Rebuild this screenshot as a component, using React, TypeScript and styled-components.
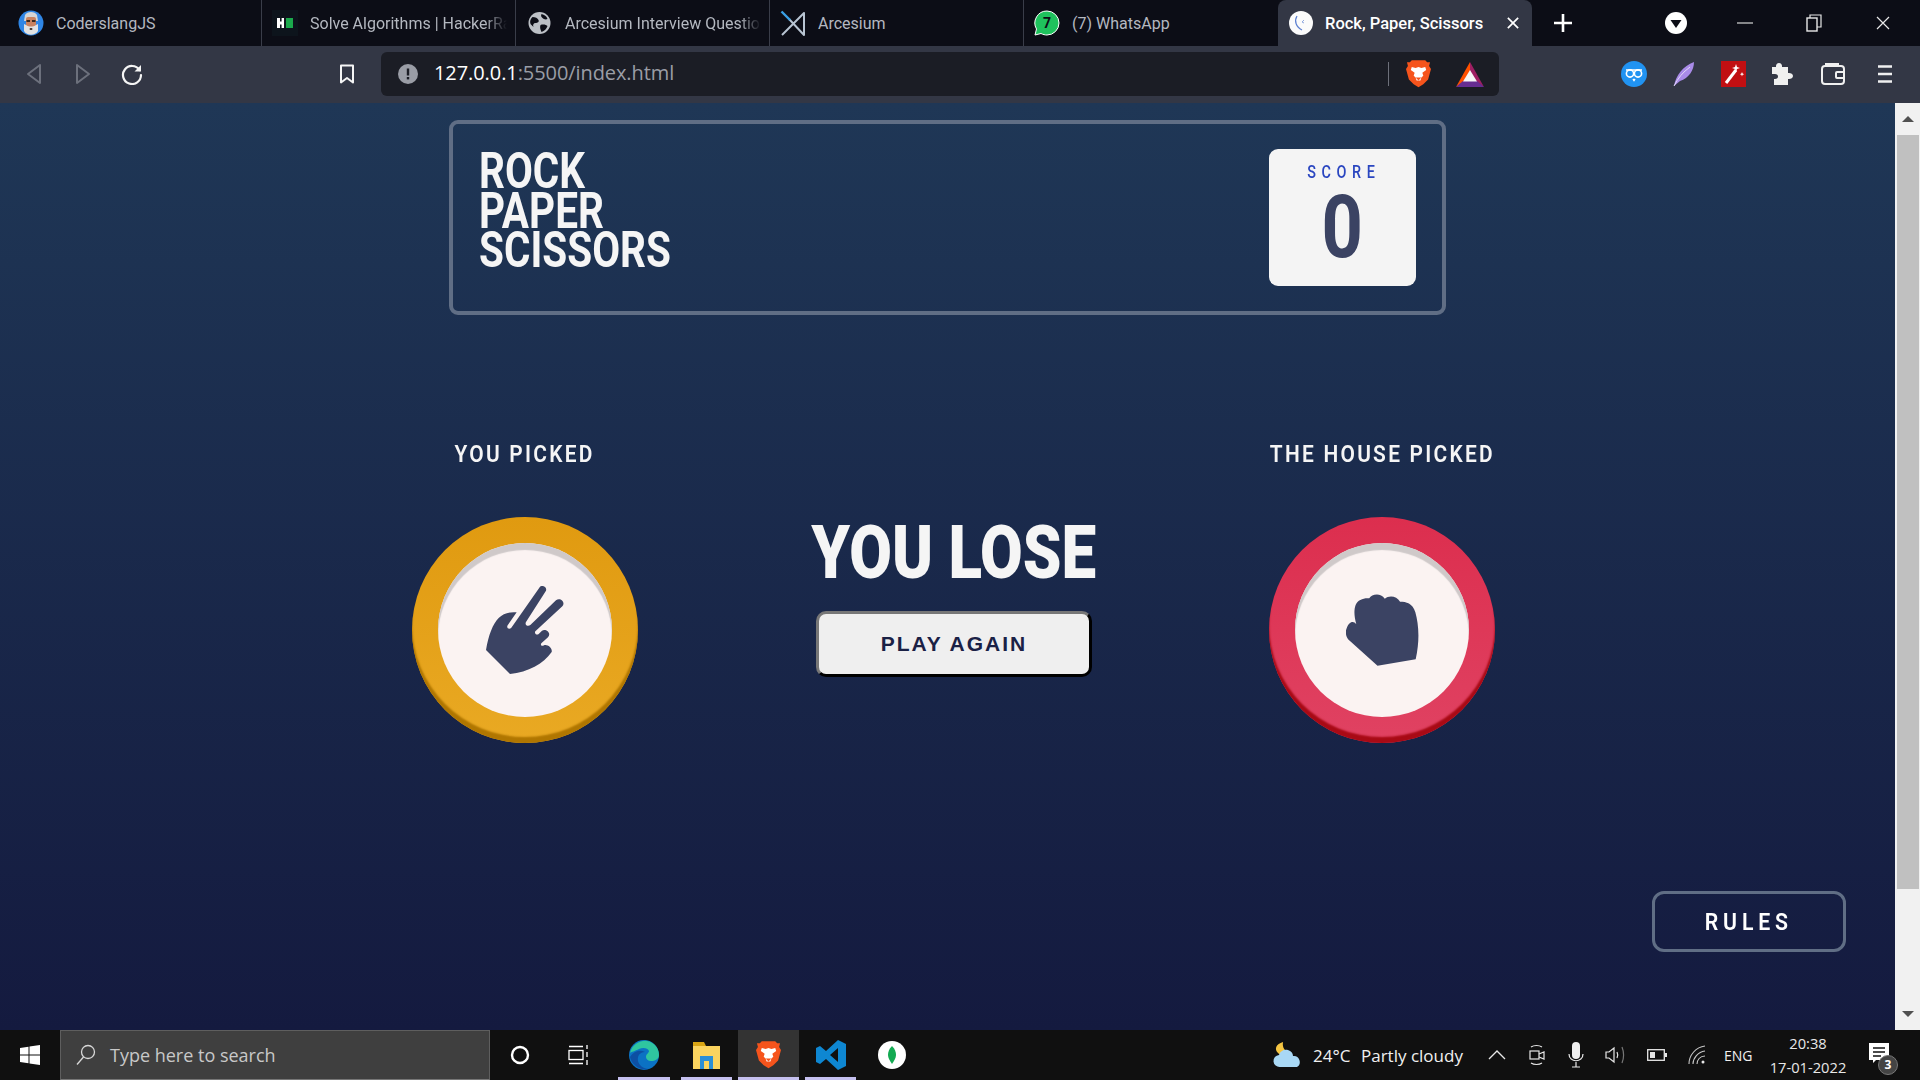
import React from "react";
import styled, { createGlobalStyle } from "styled-components";

const GlobalStyle = createGlobalStyle`
  html, body {
    margin: 0;
    padding: 0;
    width: 100%;
    height: 100%;
    overflow: hidden;
    background: #101010;
  }
  * { box-sizing: border-box; }
  body { font-family: "Open Sans", "Liberation Sans", sans-serif; }
`;

const Screen = styled.div`
  width: 1920px;
  height: 1080px;
  display: flex;
  flex-direction: column;
`;

/* browser chrome */
const TabStrip = styled.div`
  height: 46px;
  background: #0c0d16;
  display: flex;
  padding-left: 8px;
`;

const Tab = styled.div<{ $active?: boolean; $divider?: boolean }>`
  width: 254px;
  height: 46px;
  flex: none;
  display: flex;
  align-items: center;
  gap: 12px;
  padding: 0 ${(p) => (p.$active ? "13px" : "8px")} 0 ${(p) => (p.$active ? "11px" : "10px")};
  background: ${(p) => (p.$active ? "#333745" : "transparent")};
  border-radius: ${(p) => (p.$active ? "8px 8px 0 0" : "0")};
  color: ${(p) => (p.$active ? "#ffffff" : "#b4b8c0")};
  font-family: Roboto, sans-serif;
  font-size: ${(p) => (p.$active ? "16.5px" : "16px")};
  font-weight: ${(p) => (p.$active ? 500 : 400)};
  white-space: nowrap;
  border-right: ${(p) => (p.$divider ? "1px solid #3a3d49" : "none")};
`;

const TabTitle = styled.span<{ $fade?: boolean }>`
  flex: 1;
  overflow: hidden;
  ${(p) =>
    p.$fade &&
    "mask-image: linear-gradient(90deg, #000 calc(100% - 22px), transparent 100%);"}
`;

const StripControls = styled.div`
  flex: 1;
  display: flex;
  align-items: center;
  height: 46px;
`;

const Slot = styled.div<{ $w: number }>`
  width: ${(p) => p.$w}px;
  flex: none;
  display: flex;
  align-items: center;
  justify-content: center;
`;

const Toolbar = styled.div`
  height: 57px;
  background: #333745;
  display: flex;
  align-items: center;
  padding-bottom: 1px;
`;

const UrlBar = styled.div`
  width: 1118px;
  height: 44px;
  background: #1b1d25;
  border-radius: 6px;
  display: flex;
  align-items: center;
  flex: none;
`;

const UrlText = styled.div`
  flex: 1;
  font-size: 20px;
  line-height: 26px;
  padding-bottom: 2px;
  color: #ffffff;
  margin-left: -1px;
  letter-spacing: -0.08px;
  span { color: #9a9da6; }
`;

const UrlDivider = styled.div`
  width: 1px;
  height: 24px;
  background: #6d707a;
`;

/* page */
const Viewport = styled.div`
  flex: 1;
  display: flex;
  min-height: 0;
`;

const Page = styled.main`
  flex: 1;
  display: flex;
  flex-direction: column;
  padding-top: 17px;
  background: linear-gradient(180deg, #1f3756 0%, #141a3f 100%);
`;

const ScoreHeader = styled.header`
  width: 997px;
  height: 195px;
  margin: 0 0 0 449px;
  border: 4px solid #606e85;
  border-radius: 9px;
  display: flex;
  justify-content: space-between;
  padding: 25px 26px 25px 26px;
`;

const GameTitle = styled.h1`
  margin: 0;
  padding-top: 3px;
  font-family: Roboto, sans-serif;
  font-size: 50px;
  font-weight: 700;
  line-height: 39.5px;
  color: #f5f5f5;
  transform: scaleX(0.81);
  transform-origin: left top;
`;

const ScoreCard = styled.div`
  width: 147px;
  height: 137px;
  background: #f4f4f4;
  border-radius: 9px;
  display: flex;
  flex-direction: column;
  align-items: center;
  padding-top: 12px;
`;

const ScoreLabel = styled.div`
  font-family: Roboto, sans-serif;
  font-size: 18px;
  font-weight: 500;
  line-height: 22px;
  letter-spacing: 7px;
  margin-right: -2px;
  color: #2a46c0;
  transform: scaleX(0.8);
`;

const ScoreValue = styled.div`
  font-family: Roboto, sans-serif;
  font-size: 88px;
  font-weight: 700;
  line-height: 88px;
  color: #3b4363;
  transform: scaleX(0.82);
`;

const Arena = styled.section`
  display: flex;
  margin: 125px 0 0 412px;
`;

const PickColumn = styled.div`
  width: 226px;
  display: flex;
  flex-direction: column;
  align-items: center;
`;

const PickLabel = styled.div`
  font-family: Roboto, sans-serif;
  font-size: 24px;
  font-weight: 600;
  line-height: 28px;
  letter-spacing: 2.6px;
  color: #f5f5f5;
  white-space: nowrap;
  transform: scaleX(0.87);
  margin-bottom: 49px;
`;

const Chip = styled.div<{ $top: string; $bottom: string; $edge: string }>`
  width: 226px;
  height: 226px;
  border-radius: 50%;
  background: linear-gradient(180deg, ${(p) => p.$top}, ${(p) => p.$bottom});
  box-shadow: inset 0 -6px 2px ${(p) => p.$edge};
  display: flex;
  align-items: center;
  justify-content: center;
`;

const ChipFace = styled.div`
  width: 174px;
  height: 174px;
  border-radius: 50%;
  background: #fbf3f2;
  box-shadow: inset 0 7px 1px #cfc9c9;
  display: flex;
  align-items: center;
  justify-content: center;
`;

const ResultColumn = styled.div`
  width: 284px;
  margin: 0 173px 0 174px;
  display: flex;
  flex-direction: column;
  align-items: center;
  padding-top: 68px;
`;

const ResultText = styled.div`
  font-family: Roboto, sans-serif;
  font-size: 75px;
  font-weight: 900;
  line-height: 88px;
  color: #f5f5f5;
  white-space: nowrap;
  transform: scaleX(0.825);
`;

const PlayAgain = styled.button`
  width: 276px;
  height: 66px;
  margin-top: 15px;
  background: #efefef;
  border: 3px outset #8a8a8a;
  border-color: #777777 #222222 #222222 #777777;
  border-radius: 10px;
  font-family: "Liberation Sans", Arial, sans-serif;
  font-size: 21px;
  font-weight: 700;
  letter-spacing: 2px;
  color: #1a2145;
`;

const RulesRow = styled.div`
  flex: 1;
  display: flex;
  justify-content: flex-end;
  align-items: flex-end;
  padding: 0 49px 78px 0;
`;

const RulesButton = styled.button`
  width: 194px;
  height: 61px;
  background: transparent;
  border: 3px solid #606e85;
  border-radius: 12px;
  color: #ffffff;
  font-family: Roboto, sans-serif;
  font-size: 24px;
  font-weight: 600;
  letter-spacing: 5.5px;
`;

const RulesLabel = styled.span`
  display: inline-block;
  transform: scaleX(0.885);
`;

const Scrollbar = styled.div`
  width: 25px;
  background: #f1f1f1;
  display: flex;
  flex-direction: column;
  align-items: center;
`;

const ScrollArrow = styled.div<{ $up?: boolean }>`
  height: 32px;
  flex: none;
  display: flex;
  align-items: center;
  justify-content: center;
  &::before {
    content: "";
    border-left: 6px solid transparent;
    border-right: 6px solid transparent;
    ${(p) => (p.$up ? "border-bottom: 6px solid #505050;" : "border-top: 6px solid #505050;")}
  }
`;

const ScrollThumb = styled.div`
  width: 22px;
  height: 754px;
  background: #c0c0c0;
`;

const ScrollTrack = styled.div`
  flex: 1;
`;

/* taskbar */
const Taskbar = styled.footer`
  height: 50px;
  background: #101010;
  display: flex;
  align-items: center;
  color: #ffffff;
`;

const SearchBox = styled.div`
  width: 430px;
  height: 50px;
  flex: none;
  background: #3f3f3f;
  border: 1px solid #5e5e5e;
  border-bottom-color: #777777;
  display: flex;
  align-items: center;
  gap: 14px;
  padding-left: 15px;
  color: #c8c8c8;
  font-size: 18px;
`;

const TaskItem = styled.div<{ $w: number; $open?: boolean; $active?: boolean }>`
  width: ${(p) => p.$w}px;
  height: 50px;
  flex: none;
  display: flex;
  align-items: center;
  justify-content: center;
  background: ${(p) => (p.$active ? "#333333" : "transparent")};
  border-bottom: 3px solid ${(p) => (p.$open ? "#c5c0ef" : "transparent")};
  border-top: 3px solid transparent;
`;

const TraySpacer = styled.div`
  flex: 1;
`;

const TrayText = styled.div<{ $w: number; $size?: number }>`
  width: ${(p) => p.$w}px;
  flex: none;
  font-size: ${(p) => p.$size ?? 17}px;
  white-space: nowrap;
  color: #f0f0f0;
`;

const Clock = styled.div`
  width: 100px;
  flex: none;
  text-align: center;
  font-size: 14.7px;
  line-height: 24px;
  color: #e8e8e8;
`;

const NotifyWrap = styled.div`
  width: 62px;
  height: 50px;
  flex: none;
  position: relative;
  display: flex;
  align-items: center;
  justify-content: center;
  padding: 0 20px 4px 0;
`;

const NotifyBadge = styled.div`
  position: absolute;
  left: 20px;
  top: 25px;
  width: 20px;
  height: 20px;
  border-radius: 50%;
  background: #444444;
  border: 1px solid #777777;
  font-size: 12px;
  font-weight: 700;
  line-height: 18px;
  text-align: center;
  color: #ffffff;
`;

function ScissorsHand() {
  return (
    <svg width="78" height="88" viewBox="258 258 234 264">
      <path
        fill="#3b4363"
        d="M330 522 L258 450 C266 405 278 372 296 354 C310 340 328 335 350 337 L323 376 C318 384 328 390 334 383 L418 263 C426 252 444 262 437 274 L378 366 C373 375 384 381 391 375 L468 301 C480 291 498 306 487 319 L406 394 C402 400 410 407 416 402 L426 392 C436 384 456 398 444 412 L424 430 C420 436 426 440 432 436 C442 432 458 444 455 456 C430 492 385 516 330 522 Z"
      />
    </svg>
  );
}

function RockHand() {
  return (
    <svg width="73" height="72" viewBox="255 282 220 215">
      <path
        fill="#3b4363"
        d="M350 497 L262 418 C254 408 252 394 258 382 C262 368 276 358 286 372 C280 350 278 330 284 314 C290 298 310 292 325 294 C332 282 358 276 372 295 C384 284 408 286 418 304 C436 304 456 308 464 336 C474 372 478 420 465 478 Z"
      />
    </svg>
  );
}

function CoderFavicon() {
  return (
    <svg width="26" height="26" viewBox="0 0 26 26">
      <circle cx="13" cy="13" r="12.5" fill="#2f86e6" />
      <path d="M7 5c2-4 10-4 12 0l1 6H6z" fill="#d5d5d5" />
      <rect x="8" y="7" width="10" height="11" rx="2" fill="#c9825f" />
      <rect x="8.500" y="10" width="3.500" height="2" fill="#3a2a20" />
      <rect x="14" y="10" width="3.500" height="2" fill="#3a2a20" />
      <path d="M6 14l2 1c3 2 7 2 10 0l2-1v7c-3 5-11 5-14 0z" fill="#e2e2e2" />
      <ellipse cx="13" cy="19" rx="1.500" ry="1" fill="#3a2a20" />
    </svg>
  );
}

function HackerFavicon() {
  return (
    <svg width="26" height="26" viewBox="0 0 26 26">
      <rect width="26" height="26" fill="#0d141c" />
      <rect x="5" y="8" width="7" height="10" fill="#ffffff" />
      <rect x="8" y="8" width="1.6" height="3.5" fill="#0d141c" />
      <rect x="8" y="14.5" width="1.6" height="3.5" fill="#0d141c" />
      <rect x="14" y="8" width="7" height="10" fill="#1ba94c" />
    </svg>
  );
}

function GlobeFavicon() {
  return (
    <svg width="27" height="24" viewBox="-1.500 0 27 24">
      <circle cx="12" cy="12" r="11" fill="#bcc0c6" />
      <path d="M5 6c3 0 5 1 6 3s-1 3-3 3-3 2-2 4l-3-3C2 10 3 8 5 6zM14 3c3 1 5 2 6 5-2 1-4 0-5-1s-2-2-1-4zM13 14c3-1 6 0 7 1-1 3-3 5-6 6-1-2-2-5-1-7z" fill="#0c0d16" />
    </svg>
  );
}

function VsFavicon() {
  return (
    <svg width="26" height="26" viewBox="0 0 26 26" fill="none">
      <path d="M2 25 L24 3 V25 L9 9" stroke="#b8c4d2" strokeWidth="2" strokeLinejoin="round" />
      <path d="M1.500 1.500 L10 10" stroke="#3aa0e6" strokeWidth="2.400" />
    </svg>
  );
}

function WhatsAppFavicon() {
  return (
    <svg width="26" height="26" viewBox="0 0 26 26">
      <path d="M13 1a12 12 0 0 1 0 24c-2 0-4-.5-6-1.5L1 25l1.5-6A12 12 0 0 1 13 1z" fill="#1fc25d" stroke="#ffffff" strokeWidth="1" />
      <text x="13" y="18" textAnchor="middle" fontSize="14" fontWeight="700" fontFamily="Roboto" fill="#0c0d16">7</text>
    </svg>
  );
}

function ActiveFavicon() {
  return (
    <svg width="24" height="24" viewBox="0 0 24 24">
      <circle cx="12" cy="12" r="12" fill="#fbfbfb" />
      <path d="M8 5C5 10 7 16 13 19" stroke="#5b7fd0" strokeWidth="1.2" fill="none" />
      <path d="M15 9l-2 2 2 1" stroke="#8fa8e0" strokeWidth="1" fill="none" />
    </svg>
  );
}

function NavArrow({ flip, color }: { flip?: boolean; color: string }) {
  return (
    <svg width="16" height="22" viewBox="0 0 16 22" style={flip ? { transform: "scaleX(-1)" } : undefined}>
      <path d="M14 2 L2 11 L14 20 Z" fill="none" stroke={color} strokeWidth="2" strokeLinejoin="round" />
    </svg>
  );
}

function ReloadIcon() {
  return (
    <svg width="22" height="22" viewBox="0 0 22 22" fill="none">
      <path d="M18.5 7A9 9 0 1 0 20 12" stroke="#f5f5f5" strokeWidth="2.2" strokeLinecap="round" />
      <path d="M20 2v6.5h-6.5z" fill="#f5f5f5" />
    </svg>
  );
}

function BookmarkIcon() {
  return (
    <svg width="16" height="20" viewBox="0 0 16 20" fill="none">
      <path d="M2 1.5h12v17l-6-4.5-6 4.5z" stroke="#f5f5f5" strokeWidth="2" strokeLinejoin="round" />
    </svg>
  );
}

function InfoIcon() {
  return (
    <svg width="20" height="20" viewBox="0 0 20 20">
      <circle cx="10" cy="10" r="10" fill="#9a9da6" />
      <rect x="8.8" y="4.5" width="2.4" height="7" fill="#1b1d25" />
      <rect x="8.8" y="13" width="2.4" height="2.4" fill="#1b1d25" />
    </svg>
  );
}

function BraveIcon({ size = 25 }: { size?: number }) {
  return (
    <svg width={size} height={size * 1.18} viewBox="0 0 26 30">
      <path d="M6 1h14l2 2 3 0-1 4 2 3-3 11-5 5-5 3-5-3-5-5L0 10l2-3-1-4 3 0z" fill="#f6541c" />
      <path d="M6 8l4 1 3-1 3 1 4-1 1 3-4 3 1 3-2 2-1 3h-4l-1-3-2-2 1-3-4-3z" fill="#ffffff" />
      <path d="M10 19h6l-3 3z" fill="#f6541c" />
    </svg>
  );
}

function BatIcon() {
  return (
    <svg width="28" height="25" viewBox="0 0 28 25">
      <path d="M14 0 L28 25 L14 15 Z" fill="#9e1f63" />
      <path d="M14 0 L0 25 L14 15 Z" fill="#ff5000" />
      <path d="M0 25 H28 L21 19 H7 Z" fill="#662d91" />
      <path d="M14 8 L21 19.500 H7 Z" fill="#f7f7f7" />
    </svg>
  );
}

function OwlIcon() {
  return (
    <svg width="26" height="26" viewBox="0 0 26 26" fill="none">
      <circle cx="13" cy="13" r="13" fill="#2193f2" />
      <circle cx="9" cy="12.5" r="3.6" stroke="#ffffff" strokeWidth="1.6" />
      <circle cx="17" cy="12.5" r="3.6" stroke="#ffffff" strokeWidth="1.6" />
      <path d="M5 9h16M12 18l1 1.5 1-1.5" stroke="#ffffff" strokeWidth="1.4" />
    </svg>
  );
}

function QuillIcon() {
  return (
    <svg width="24" height="26" viewBox="0 0 24 26">
      <path d="M2 25C4 14 11 5 22 1c0 8-5 16-14 19z" fill="#a98be8" />
      <path d="M2 25c4-8 9-14 16-19" stroke="#e2d8f8" strokeWidth="1" fill="none" />
    </svg>
  );
}

function WandIcon() {
  return (
    <svg width="25" height="26" viewBox="0 0 25 26">
      <rect width="25" height="26" fill="#c10f12" />
      <path d="M5 22L15 9" stroke="#ffffff" strokeWidth="3" />
      <path d="M15 3l1 3 3 1-3 1-1 3-1-3-3-1 3-1zM21 11l.6 1.6 1.6.6-1.6.6-.6 1.6-.6-1.6-1.6-.6 1.6-.6z" fill="#ffffff" />
    </svg>
  );
}

function PuzzleIcon() {
  return (
    <svg width="24" height="24" viewBox="0 0 24 24">
      <path d="M9 1c2 0 3 1.500 3 3v1h6v6h1c2 0 4 1 4 3s-2 3-4 3h-1v6H4v-6h1c2 0 3-1 3-2.500S7 12 5 12H2V5h4V4c0-1.500 1-3 3-3z" fill="#f0f0f0" />
    </svg>
  );
}

function WalletIcon() {
  return (
    <svg width="24" height="22" viewBox="0 0 24 22" fill="none">
      <rect x="1" y="3" width="22" height="18" rx="3" stroke="#f0f0f0" strokeWidth="2" />
      <path d="M4 1h14" stroke="#f0f0f0" strokeWidth="2" />
      <rect x="15" y="9" width="8" height="6" rx="1" fill="#333745" stroke="#f0f0f0" strokeWidth="2" />
    </svg>
  );
}

function MenuIcon() {
  return (
    <svg width="16" height="20" viewBox="0 0 16 20">
      <path d="M1 2.500h14M1 10h14M1 17.500h14" stroke="#f0f0f0" strokeWidth="2.400" />
    </svg>
  );
}

function DropdownBadge() {
  return (
    <svg width="22" height="22" viewBox="0 0 22 22">
      <circle cx="11" cy="11" r="11" fill="#ffffff" />
      <path d="M5.500 8h11L11 16z" fill="#0c0d16" />
    </svg>
  );
}

function PlusIcon() {
  return (
    <svg width="20" height="20" viewBox="0 0 20 20">
      <path d="M10 1v18M1 10h18" stroke="#ffffff" strokeWidth="2.600" />
    </svg>
  );
}

function CloseGlyph({ size, color, width }: { size: number; color: string; width: number }) {
  return (
    <svg width={size} height={size} viewBox="0 0 14 14">
      <path d="M1 1l12 12M13 1L1 13" stroke={color} strokeWidth={width} />
    </svg>
  );
}

function MinimizeIcon() {
  return (
    <svg width="16" height="2" viewBox="0 0 16 2">
      <path d="M0 1h16" stroke="#d8d8d8" strokeWidth="1.200" />
    </svg>
  );
}

function RestoreIcon() {
  return (
    <svg width="16" height="18" viewBox="0 0 16 18" fill="none">
      <rect x="1" y="4" width="10" height="13" stroke="#e8e8e8" strokeWidth="1.400" />
      <path d="M4 4V1h11v12h-4" stroke="#e8e8e8" strokeWidth="1.200" />
    </svg>
  );
}

function WindowsLogo() {
  return (
    <svg width="20" height="20" viewBox="0 0 20 20">
      <path d="M0 3l8.500-1.300v7.800H0zM9.500 1.500L20 0v9.500H9.500zM0 10.500h8.500v7.800L0 17zM9.500 10.500H20V20L9.500 18.500z" fill="#ffffff" />
    </svg>
  );
}

function SearchGlass() {
  return (
    <svg width="20" height="22" viewBox="0 0 20 22" fill="none">
      <circle cx="12" cy="8" r="6.500" stroke="#d8d8d8" strokeWidth="1.300" />
      <path d="M7.500 13L1 20.500" stroke="#d8d8d8" strokeWidth="1.300" />
    </svg>
  );
}

function CortanaIcon() {
  return (
    <svg width="20" height="20" viewBox="0 0 20 20" fill="none">
      <circle cx="10" cy="10" r="8" stroke="#ffffff" strokeWidth="2.400" />
    </svg>
  );
}

function TaskViewIcon() {
  return (
    <svg width="22" height="20" viewBox="0 0 22 20" fill="none" stroke="#ffffff" strokeWidth="1.300">
      <rect x="1" y="5.500" width="14" height="9" />
      <path d="M1 1.500h14M1 18.500h14M19 0v4M19 7v5M19 15v5" />
    </svg>
  );
}

function EdgeIcon() {
  return (
    <svg width="30" height="30" viewBox="0 0 30 30">
      <circle cx="15" cy="15" r="15" fill="#0b72c4" />
      <path d="M1 13C3 4 12 0 18 1c7 1 12 7 12 14 0 4-4 6-8 6-3 0-5-2-5-4 0-3 3-4 3-6-1-3-6-4-10-2-4 2-8 3-9 4z" fill="#2fc5a0" />
      <path d="M16 12c-5 0-8 4-7 9 1 4 5 8 11 8-8 2-17-3-19-12 3-5 9-8 15-5z" fill="#0d4fa3" />
    </svg>
  );
}

function FolderIcon() {
  return (
    <svg width="29" height="29" viewBox="0 0 29 29">
      <path d="M1 1h11l2 4H1z" fill="#d9a514" />
      <rect x="1" y="5" width="27" height="23" fill="#fbd45f" />
      <rect x="8" y="15" width="13" height="13" fill="#2b8fd6" />
      <rect x="12" y="20" width="5" height="8" fill="#fbd45f" />
    </svg>
  );
}

function VsCodeIcon() {
  return (
    <svg width="30" height="30" viewBox="0 0 30 30">
      <path d="M22 0l8 4v22l-8 4-12-11-6 5-4-2V8l4-2 6 5zM22 8l-8 7 8 7z" fill="#0e87d2" />
    </svg>
  );
}

function MongoIcon() {
  return (
    <svg width="28" height="28" viewBox="0 0 28 28">
      <circle cx="14" cy="14" r="14" fill="#ffffff" />
      <path d="M14 5c3 3 4 6 4 9s-2 6-4 9c-2-3-4-6-4-9s1-6 4-9z" fill="#13aa52" />
    </svg>
  );
}

function WeatherIcon() {
  return (
    <svg width="30" height="28" viewBox="0 0 30 28">
      <path d="M10 1c-1 6 2 10 8 10-2 4-9 5-13 1S3 3 10 1z" fill="#f5c542" />
      <path d="M7 26a6 6 0 0 1-1-12c1-4 5-6 9-5 3 1 5 3 5 6a6 6 0 0 1 4 11z" fill="#a9d8f5" />
    </svg>
  );
}

function ChevronUp() {
  return (
    <svg width="18" height="10" viewBox="0 0 18 10" fill="none">
      <path d="M1 9l8-8 8 8" stroke="#e8e8e8" strokeWidth="1.300" />
    </svg>
  );
}

function MeetIcon() {
  return (
    <svg width="16" height="24" viewBox="0 0 16 24" fill="none" stroke="#e8e8e8" strokeWidth="1.200">
      <rect x="1" y="8" width="9" height="8" />
      <path d="M10 11l5-2v7l-5-2M2 4c3-2 8-2 11 0M2 20c3 2 8 2 11 0" />
    </svg>
  );
}

function MicIcon() {
  return (
    <svg width="16" height="26" viewBox="0 0 16 26" fill="none">
      <rect x="4" y="0" width="8" height="17" rx="4" fill="#f0f0f0" />
      <path d="M1 12c0 9 14 9 14 0M8 20v5M4 25h8" stroke="#e8e8e8" strokeWidth="1.200" />
    </svg>
  );
}

function SpeakerIcon() {
  return (
    <svg width="20" height="20" viewBox="0 0 20 20" fill="none" stroke="#e8e8e8" strokeWidth="1.200">
      <path d="M1 7h3l5-4v14l-5-4H1z" />
      <path d="M12 7c1 2 1 4 0 6" />
      <path d="M17 2c2 5 2 11 0 16" stroke="#777777" />
    </svg>
  );
}

function BatteryIcon() {
  return (
    <svg width="20" height="12" viewBox="0 0 20 12" fill="none">
      <rect x="0.700" y="0.700" width="16.600" height="10.600" stroke="#e8e8e8" strokeWidth="1.300" />
      <rect x="3" y="3" width="5" height="6" fill="#e8e8e8" />
      <rect x="18" y="4" width="2" height="4" fill="#e8e8e8" />
    </svg>
  );
}

function WifiIcon() {
  return (
    <svg width="18" height="20" viewBox="0 0 18 20" fill="none" stroke="#c8c8c8" strokeWidth="1.100">
      <path d="M1 19C1 10 8 2 17 1M5 19c0-6 5-12 12-13M9 19c0-4 3-8 8-8" />
      <circle cx="15" cy="17" r="1.500" fill="#e8e8e8" stroke="none" />
    </svg>
  );
}

function NotifyIcon() {
  return (
    <svg width="20" height="20" viewBox="0 0 20 20">
      <path d="M0 0h20v17H7l-3 3v-3H0z" fill="#ffffff" />
      <path d="M4 5h12M4 9h12M4 13h8" stroke="#101010" strokeWidth="1.400" />
    </svg>
  );
}

const tabs = [
  { id: "coder", title: "CoderslangJS", icon: <CoderFavicon /> },
  { id: "hacker", title: "Solve Algorithms | HackerRank", icon: <HackerFavicon />, fade: true },
  { id: "arc", title: "Arcesium Interview Questions", icon: <GlobeFavicon />, fade: true },
  { id: "vs", title: "Arcesium", icon: <VsFavicon /> },
  { id: "wa", title: "(7) WhatsApp", icon: <WhatsAppFavicon /> },
];

export default function App() {
  return (
    <Screen>
      <GlobalStyle />
      <TabStrip>
        {tabs.map((tab, i) => (
          <Tab key={tab.id} $divider={i < tabs.length - 1}>
            {tab.icon}
            <TabTitle $fade={tab.fade}>{tab.title}</TabTitle>
          </Tab>
        ))}
        <Tab $active>
          <ActiveFavicon />
          <TabTitle>Rock, Paper, Scissors</TabTitle>
          <CloseGlyph size={12} color="#ffffff" width={2} />
        </Tab>
        <StripControls>
          <Slot $w={62}><PlusIcon /></Slot>
          <Slot $w={52} />
          <Slot $w={60}><DropdownBadge /></Slot>
          <Slot $w={77}><MinimizeIcon /></Slot>
          <Slot $w={62}><RestoreIcon /></Slot>
          <Slot $w={76}><CloseGlyph size={14} color="#e8e8e8" width={1.2} /></Slot>
        </StripControls>
      </TabStrip>

      <Toolbar>
        <Slot $w={68}><NavArrow color="#6c707c" /></Slot>
        <Slot $w={30}><NavArrow flip color="#6c707c" /></Slot>
        <Slot $w={68}><ReloadIcon /></Slot>
        <Slot $w={161} />
        <Slot $w={40}><BookmarkIcon /></Slot>
        <Slot $w={14} />
        <UrlBar>
          <Slot $w={54}><InfoIcon /></Slot>
          <UrlText>
            127.0.0.1<span>:5500/index.html</span>
          </UrlText>
          <UrlDivider />
          <Slot $w={58}><BraveIcon /></Slot>
          <Slot $w={45}><BatIcon /></Slot>
          <Slot $w={7} />
        </UrlBar>
        <Slot $w={117} />
        <Slot $w={36}><OwlIcon /></Slot>
        <Slot $w={64}><QuillIcon /></Slot>
        <Slot $w={34}><WandIcon /></Slot>
        <Slot $w={64}><PuzzleIcon /></Slot>
        <Slot $w={38}><WalletIcon /></Slot>
        <Slot $w={66}><MenuIcon /></Slot>
      </Toolbar>

      <Viewport>
        <Page>
          <ScoreHeader>
            <GameTitle>
              ROCK
              <br />
              PAPER
              <br />
              SCISSORS
            </GameTitle>
            <ScoreCard>
              <ScoreLabel>SCORE</ScoreLabel>
              <ScoreValue>0</ScoreValue>
            </ScoreCard>
          </ScoreHeader>

          <Arena>
            <PickColumn>
              <PickLabel>YOU PICKED</PickLabel>
              <Chip $top="#e09a10" $bottom="#e9a923" $edge="#b07600">
                <ChipFace>
                  <ScissorsHand />
                </ChipFace>
              </Chip>
            </PickColumn>
            <ResultColumn>
              <ResultText>YOU LOSE</ResultText>
              <PlayAgain>PLAY AGAIN</PlayAgain>
            </ResultColumn>
            <PickColumn>
              <PickLabel>THE HOUSE PICKED</PickLabel>
              <Chip $top="#dc2e4e" $bottom="#e04262" $edge="#a80a15">
                <ChipFace>
                  <RockHand />
                </ChipFace>
              </Chip>
            </PickColumn>
          </Arena>

          <RulesRow>
            <RulesButton>
              <RulesLabel>RULES</RulesLabel>
            </RulesButton>
          </RulesRow>
        </Page>
        <Scrollbar>
          <ScrollArrow $up />
          <ScrollThumb />
          <ScrollTrack />
          <ScrollArrow />
        </Scrollbar>
      </Viewport>

      <Taskbar>
        <Slot $w={60}><WindowsLogo /></Slot>
        <SearchBox>
          <SearchGlass />
          <span>Type here to search</span>
        </SearchBox>
        <TaskItem $w={59}><CortanaIcon /></TaskItem>
        <TaskItem $w={60}><TaskViewIcon /></TaskItem>
        <Slot $w={9} />
        <TaskItem $w={52} $open><EdgeIcon /></TaskItem>
        <Slot $w={11} />
        <TaskItem $w={51} $open><FolderIcon /></TaskItem>
        <Slot $w={6} />
        <TaskItem $w={61} $open $active><BraveIcon size={25} /></TaskItem>
        <Slot $w={6} />
        <TaskItem $w={51} $open><VsCodeIcon /></TaskItem>
        <TaskItem $w={72}><MongoIcon /></TaskItem>
        <TraySpacer />
        <Slot $w={50}><WeatherIcon /></Slot>
        <TrayText $w={48}>24°C</TrayText>
        <TrayText $w={121}>Partly cloudy</TrayText>
        <Slot $w={30}><ChevronUp /></Slot>
        <Slot $w={50}><MeetIcon /></Slot>
        <Slot $w={28}><MicIcon /></Slot>
        <Slot $w={50}><SpeakerIcon /></Slot>
        <Slot $w={34}><BatteryIcon /></Slot>
        <Slot $w={46}><WifiIcon /></Slot>
        <Slot $w={38}><TrayText $w={30} $size={14}>ENG</TrayText></Slot>
        <Clock>
          20:38
          <br />
          17-01-2022
        </Clock>
        <NotifyWrap>
          <NotifyIcon />
          <NotifyBadge>3</NotifyBadge>
        </NotifyWrap>
      </Taskbar>
    </Screen>
  );
}
